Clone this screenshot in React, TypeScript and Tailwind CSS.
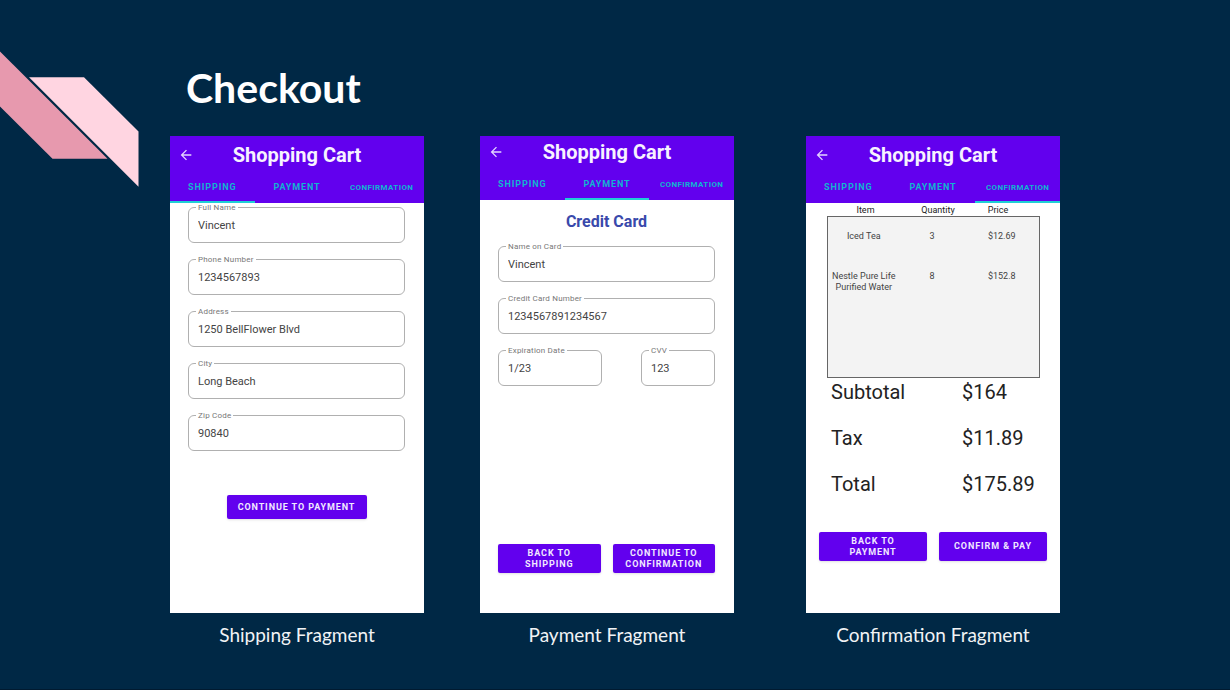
import type { ReactNode } from "react";
import clsx from "clsx";
import { MdArrowBack } from "react-icons/md";

type Step = "Shipping" | "Payment" | "Confirmation";

const steps: Step[] = ["Shipping", "Payment", "Confirmation"];

function Header({ active }: { active: Step }) {
  return (
    <header className={clsx("bg-[#6200ee]", active === "Payment" ? "pt-1" : "pt-[7px]")}>
      <div className="grid h-6 grid-cols-[1fr_auto_1fr] items-center">
        <button type="button" aria-label="Back" className="ml-2 w-4 text-[#e4d4ff]">
          <MdArrowBack size={16} />
        </button>
        <h2 className="text-xl leading-6 font-bold text-[#f7f2ff]">Shopping Cart</h2>
      </div>
      <nav className="grid grid-cols-3">
        {steps.map((step) => (
          <button
            key={step}
            type="button"
            className={clsx(
              "flex h-9 items-center justify-center border-b-2 pt-2 font-bold text-[#11b5d0] uppercase",
              step === "Confirmation" ? "text-[8px] tracking-wider" : "text-[9px] tracking-widest",
              step === active ? "border-[#1fcfd6]" : "border-transparent",
            )}
          >
            {step}
          </button>
        ))}
      </nav>
    </header>
  );
}

function Field({ id, label, value, className }: { id: string; label: string; value: string; className?: string }) {
  return (
    <div className={clsx("relative", className)}>
      <label
        htmlFor={id}
        className="absolute -top-1 left-2 bg-white px-0.5 text-[8px] leading-[10px] tracking-wide text-[#777777]"
      >
        {label}
      </label>
      <input
        id={id}
        defaultValue={value}
        className="block h-9 w-full rounded-md border border-[#b0b0b0] bg-white px-[9px] text-[11px] text-[#444444] outline-none"
      />
    </div>
  );
}

function Action({ children, className }: { children: ReactNode; className?: string }) {
  return (
    <button
      type="button"
      className={clsx(
        "rounded-xs bg-[#6200ee] text-[9px] leading-[11px] font-bold tracking-widest text-[#f1e8ff] uppercase shadow-sm",
        className,
      )}
    >
      {children}
    </button>
  );
}

function Screen({ step, className, children }: { step: Step; className?: string; children: ReactNode }) {
  return (
    <figure className={clsx("min-w-0 flex-1", className)}>
      <div className="flex min-h-[477px] flex-col bg-white font-['Roboto',sans-serif]">
        <Header active={step} />
        {children}
      </div>
      <figcaption className="pt-2 text-center text-[19px] leading-7 text-[#f1f3f5]">{step} Fragment</figcaption>
    </figure>
  );
}

const shippingFields = [
  { id: "full-name", label: "Full Name", value: "Vincent" },
  { id: "phone", label: "Phone Number", value: "1234567893" },
  { id: "address", label: "Address", value: "1250 BellFlower Blvd" },
  { id: "city", label: "City", value: "Long Beach" },
  { id: "zip", label: "Zip Code", value: "90840" },
];

const items = [
  { name: "Iced Tea", quantity: 3, price: "$12.69" },
  { name: "Nestle Pure Life Purified Water", quantity: 8, price: "$152.8" },
];

const totals = [
  { label: "Subtotal", value: "$164" },
  { label: "Tax", value: "$11.89" },
  { label: "Total", value: "$175.89" },
];

export default function App() {
  return (
    <main className="relative min-h-screen border-b border-[#001a30] bg-[#002845] px-[170px] pt-16 font-['Lato',sans-serif]">
      <svg className="absolute top-0 left-0" width="140" height="190" viewBox="0 0 140 190" aria-hidden="true">
        <path d="M0 51.5L107.5 158.7H52.5L0 106.5Z" fill="#e799ae" />
        <path d="M29 77.3H84L138.5 131.5V186.8Z" fill="#ffd5e1" />
      </svg>
      <h1 className="pl-4 text-[41px] leading-[48px] font-bold text-white">Checkout</h1>
      <div className="mt-6 flex gap-14">
        <Screen step="Shipping">
          <form className="flex flex-col gap-4 pt-1 pr-[19px] pl-[18px]">
            {shippingFields.map((field) => (
              <Field key={field.id} {...field} />
            ))}
            <Action className="mt-7 h-6 w-[140px] self-center">Continue to Payment</Action>
          </form>
        </Screen>

        <Screen step="Payment">
          <form className="flex flex-1 flex-col gap-4 pt-3.5 pr-[19px] pb-10 pl-[18px]">
            <h3 className="text-center text-base leading-4 font-bold text-[#3949ab]">Credit Card</h3>
            <Field id="card-name" label="Name on Card" value="Vincent" />
            <Field id="card-number" label="Credit Card Number" value="1234567891234567" />
            <div className="flex justify-between">
              <Field id="expiration" label="Expiration Date" value="1/23" className="w-[104px]" />
              <Field id="cvv" label="CVV" value="123" className="w-[74px]" />
            </div>
            <div className="mt-auto grid grid-cols-2 gap-3">
              <Action className="h-[29px]">
                Back to
                <br />
                Shipping
              </Action>
              <Action className="h-[29px]">
                Continue to
                <br />
                Confirmation
              </Action>
            </div>
          </form>
        </Screen>

        <Screen step="Confirmation" className="ml-4">
          <div className="flex flex-1 flex-col pb-[52px]">
            <div className="pr-5 pl-[21px]">
              <table className="w-full table-fixed border-collapse text-[9px] leading-[11px] text-[#444444]">
                <colgroup>
                  <col className="w-[72px]" />
                  <col className="w-[65px]" />
                  <col />
                </colgroup>
                <thead className="text-[#222222]">
                  <tr>
                    <th className="pt-0.5 pl-1 font-normal">Item</th>
                    <th className="pt-0.5 pl-3 font-normal">Quantity</th>
                    <th className="pt-0.5 pr-2 font-normal">Price</th>
                  </tr>
                </thead>
                <tbody className="border border-[#666666] bg-[#f3f3f3] text-center align-top">
                  {items.map((item) => (
                    <tr key={item.name} className="h-10 last:h-[121px]">
                      <td className="pt-3.5">{item.name}</td>
                      <td className="pt-3.5">{item.quantity}</td>
                      <td className="pt-3.5">{item.price}</td>
                    </tr>
                  ))}
                </tbody>
              </table>
            </div>
            <dl className="grid grid-cols-[131px_1fr] gap-y-[22px] pt-0.5 pl-[25px] text-xl leading-6 text-[#222222]">
              {totals.map((total) => (
                <div key={total.label} className="contents">
                  <dt>{total.label}</dt>
                  <dd>{total.value}</dd>
                </div>
              ))}
            </dl>
            <div className="mt-auto grid grid-cols-2 gap-3 px-[13px]">
              <Action className="h-[29px]">
                Back to
                <br />
                Payment
              </Action>
              <Action className="h-[29px]">Confirm &amp; Pay</Action>
            </div>
          </div>
        </Screen>
      </div>
    </main>
  );
}
